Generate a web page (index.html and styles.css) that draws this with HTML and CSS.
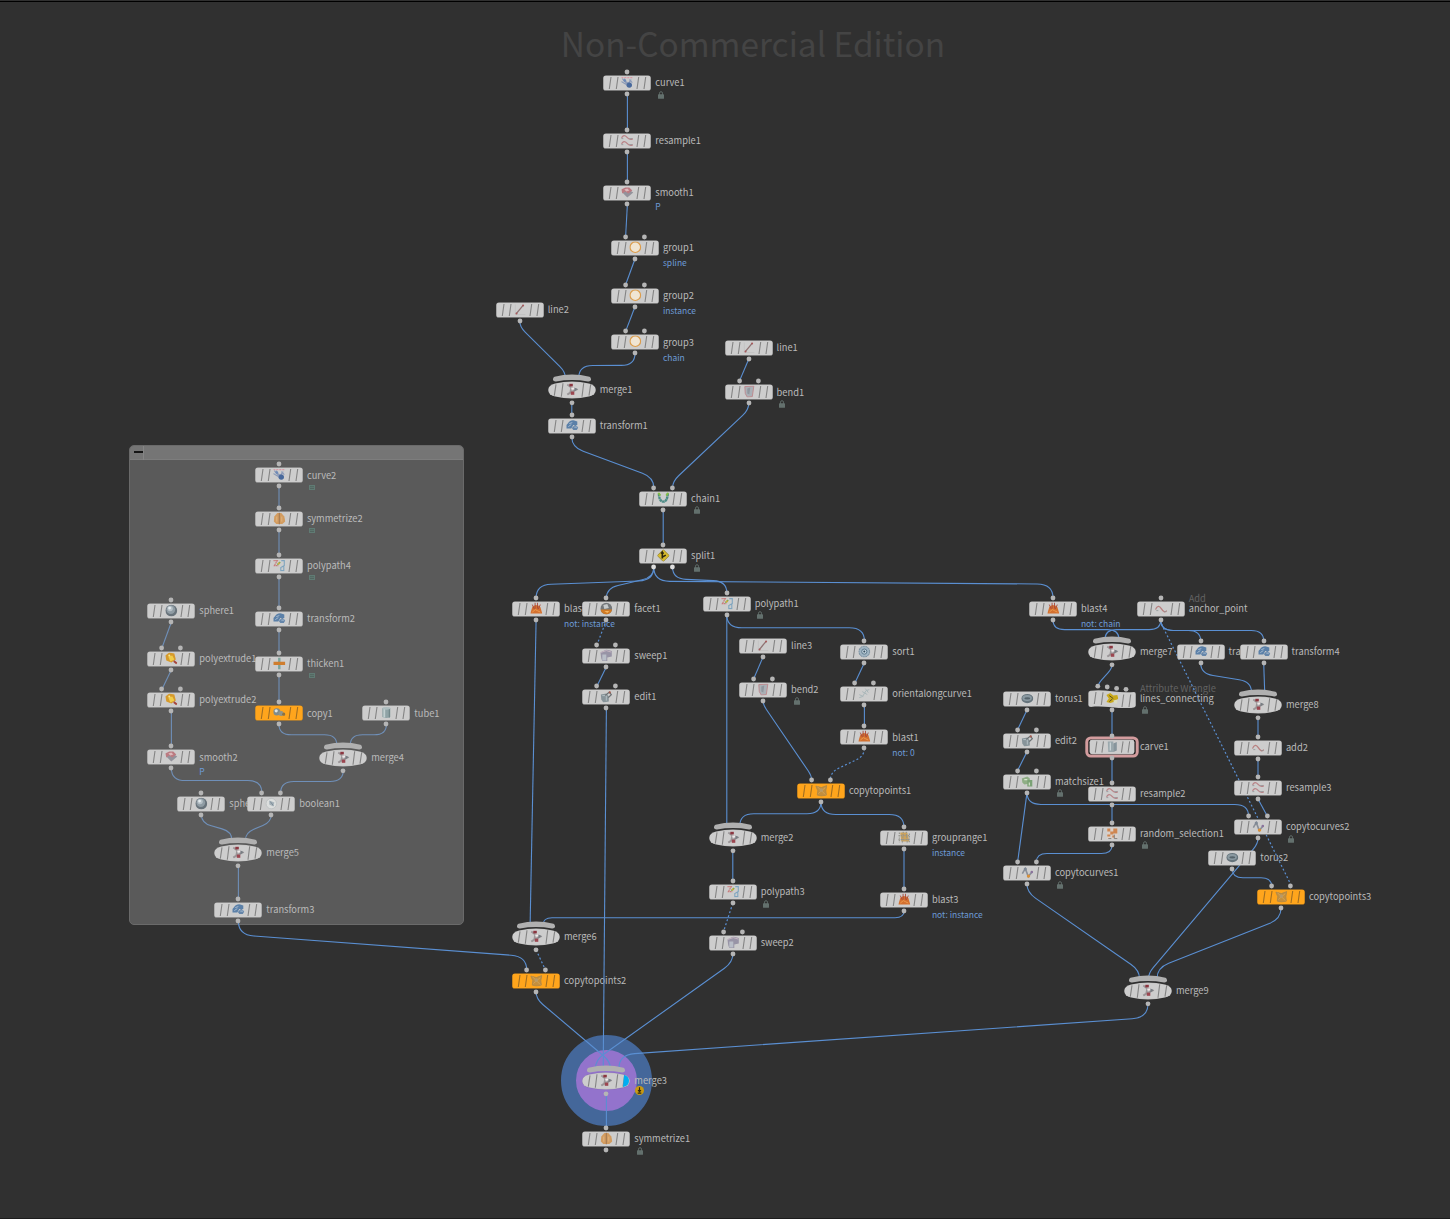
FILE: index.html
```html
<!DOCTYPE html>
<html lang="en">
<head>
    <meta charset="UTF-8">
    <meta name="viewport" content="width=device-width, initial-scale=1.0">
    <title>Network Editor</title>
    <link rel="stylesheet" href="styles.css">
</head>
<body>
    <svg class="symbols" width="0" height="0">
        <!-- node bodies -->
        <symbol id="shape-box" viewBox="0 0 48 18">
            <rect class="shape" x="0.2" y="1.4" width="47.6" height="15.2" rx="2.6"/>
            <path class="ribs" d="M8 3 6.3 15M15 3 13.3 15M35.7 3 34 15M42.7 3 41 15"/>
        </symbol>
        <symbol id="shape-pill" viewBox="0 0 48 18">
            <path class="shape" d="M7 2.4Q24-1.3 41 2.4Q47.8 4 47.8 9T41 15.6Q24 19.3 7 15.6Q.2 14 .2 9T7 2.4Z"/>
            <path class="ribs" d="M8 3.4 6.3 14.6M15 2.2 13.3 15.8M35.7 2.2 34 15.8M42.7 3.4 41 14.6"/>
        </symbol>
        <symbol id="shape-wave" viewBox="0 0 48 18">
            <path class="shape" d="M.3 3Q.3 1 2.5.8C16-1.5 30 3.6 46 2Q47.8 2 47.8 4V15.5Q47.8 17.6 45 17.8C31 19.8 17 15 3 17Q.3 17 .3 15Z"/>
            <path class="ribs" d="M8 2 6.3 14M15 2.3 13.3 15M35.7 4.5 34 17M42.7 4.5 41 17"/>
        </symbol>
        <symbol id="shape-cap" viewBox="0 0 40 9">
            <path d="M2.5 2.8Q20-1.6 37.5 2.8Q39.3 3.8 39 6Q38.5 7.6 36 7.4Q20 4.6 4 7.4Q1.5 7.6 1 6Q.7 3.8 2.5 2.8Z"/>
        </symbol>
        <symbol id="lock" viewBox="0 0 6 8">
            <path d="M1.5 4V2.2Q1.5.7 3 .7T4.5 2.2V4" fill="none" stroke="#63706d" stroke-width=".9"/>
            <rect x="0" y="3.2" width="6" height="4.6" rx=".6" fill="#63706d"/>
        </symbol>
        <symbol id="badge" viewBox="0 0 6 5">
            <rect width="6" height="5" fill="#607b74"/>
            <path d="M1 1.7H5M1 3.5H5" stroke="#4d5c58" stroke-width=".7"/>
        </symbol>
        <symbol id="warning" viewBox="0 0 8 8">
            <circle cx="4" cy="4" r="4" fill="#c99a12"/>
            <path d="M4 1.2V5M2.7 3.6 4 5 5.3 3.6M2.4 6.3H5.6" fill="none" stroke="#33290b"/>
        </symbol>

        <!-- operator icons -->
        <symbol id="i-curve" viewBox="0 0 12 12">
            <path d="M0 1H12" stroke="#d99aa6" stroke-width="1.2" stroke-dasharray="2 1"/>
            <path d="M1 2 8 10M3 2Q4 7 9 6M5 9 10 3M0 5 5 8M8 3 11 6" fill="none" stroke="#8c9bb8" stroke-width="1.2"/>
            <circle cx="8" cy="8.5" r="2.7" fill="#48699c"/><circle cx="3.5" cy="4" r="1.4" fill="#6e8bb8"/>
        </symbol>
        <symbol id="i-resample" viewBox="0 0 12 12">
            <path d="M0 3.5Q2.5-1 5.5 2.500T11.5 4M0 9.500Q2.5 5 5.500 8.500T11.500 10" fill="none" stroke="#b98488" stroke-width="1.3"/>
            <path d="M0 4H2M8 4H11M0 10H2M8 10H11" stroke="#8d9698" stroke-width=".8"/>
        </symbol>
        <symbol id="i-smooth" viewBox="0 0 12 12">
            <path d="M1 6 7 3 12 6 6 11Z" fill="#93929b"/>
            <path d="M0 3 4 1 8 1 11 4 7 7 4 5 1 7Z" fill="#bb7a81"/>
            <path d="M3 3 6 2 8 4 5 5Z" fill="#dcb7ba"/>
        </symbol>
        <symbol id="i-group" viewBox="0 0 12 12">
            <circle cx="6" cy="5.600" r="5.300" fill="#f0e5d3" stroke="#dc9d4c" stroke-width="1.200"/>
        </symbol>
        <symbol id="i-line" viewBox="0 0 12 12">
            <path d="M1 11H11M1 1V11" stroke="#b9b9b9" stroke-width=".5"/>
            <path d="M2 10 9 1.500" stroke="#8f7373" stroke-width="1.300"/>
            <circle cx="2.200" cy="9.800" r="1" fill="#a8595b"/><circle cx="8.800" cy="1.800" r="1" fill="#a8595b"/>
        </symbol>
        <symbol id="i-merge" viewBox="0 0 12 12">
            <path d="M1 1 5 4 4 9 1 11M5 4 10 6 4 9" fill="none" stroke="#9b9698" stroke-width="1.900"/>
            <rect x="3" y="0" width="3.500" height="2.800" fill="#8c3640"/>
            <rect x="4.500" y="8" width="3.500" height="3.200" fill="#9c4650"/>
            <path d="M8 4 11.500 5.500 8 8Z" fill="#777d83"/><path d="M5 4H8V6H5Z" fill="#efe9ea"/>
        </symbol>
        <symbol id="i-transform" viewBox="0 0 12 12">
            <path d="M1.500 4Q4 0 8 .800L11 2V5.500L7 5.500 5 9H0V5.500Z" fill="#5b80a8"/>
            <path d="M5.500 8.500 9 5 12 8 10.500 10.500H7Z" fill="#6485a9"/>
            <path d="M3 4 6 3M2 7 5 5M8 7.500H11" stroke="#b7c8d9" stroke-width=".8"/>
        </symbol>
        <symbol id="i-bend" viewBox="0 0 12 12">
            <path d="M1.500 1 10.500 .500 9 11 4 11.500 2 8Z" fill="#aab0b6" stroke="#bd8b90" stroke-width="1"/>
            <path d="M4 3 7 2 6 9 4 8Z" fill="#8f969e"/>
        </symbol>
        <symbol id="i-chain" viewBox="0 0 12 12">
            <path d="M1.500 1Q2 9 6 9T10.500 1" fill="none" stroke="#4c8b86" stroke-width="2.400" stroke-dasharray="2.500 .4"/>
            <path d="M1 0 3 3M11 0 9 3" stroke="#83bd48" stroke-width="1.900"/>
        </symbol>
        <symbol id="i-split" viewBox="0 0 12 12">
            <path d="M6 0 12 6 6 12 0 6Z" fill="#d6b92c" stroke="#8a7a2c" stroke-width=".7"/>
            <path d="M5 9V2.500M3.800 4.200 5 2.600 6.200 4.200M5 7.500 8.500 5.500" fill="none" stroke="#2b2610" stroke-width="1.600"/>
        </symbol>
        <symbol id="i-symmetrize" viewBox="0 0 12 12">
            <path d="M1 4 4 .500H8L11 4 12 9 9 11.500H3L.5 9Z" fill="#d29c60"/>
            <path d="M6 0V12" stroke="#9a7350" stroke-width=".9"/>
            <path d="M3.500 4V9M8.500 4V9" stroke="#e3bb88" stroke-width=".8"/>
        </symbol>
        <symbol id="i-polypath" viewBox="0 0 12 12">
            <path d="M0 1H4L1 6H5" fill="none" stroke="#c87b7b" stroke-width="1.200" stroke-dasharray="1.500 .4"/>
            <path d="M4 5 7 2.500" stroke="#7cae4b" stroke-width="1.400"/><circle cx="5.500" cy="4" r="1" fill="#d8a73a"/>
            <path d="M8 1H11V6L7.500 8V11H10.500V7" fill="none" stroke="#7fa5bf" stroke-width="1.100"/>
        </symbol>
        <symbol id="i-sphere" viewBox="0 0 12 12">
            <circle cx="6" cy="6" r="5.900" fill="#68737b"/><circle cx="5.500" cy="5" r="4.400" fill="#8f9ca4"/>
            <circle cx="4.800" cy="4" r="2.700" fill="#b7c1c7"/><circle cx="4.300" cy="3.500" r="1.400" fill="#e3eaee"/>
        </symbol>
        <symbol id="i-polyextrude" viewBox="0 0 12 12">
            <path d="M0 3 4 0 9 1 10.500 7 6 10 1 8Z" fill="#d69a2c"/>
            <path d="M3 4 7 3 9 7 5 9Z" fill="#f0cd4a"/>
            <path d="M8.500 8.500 11.500 11" stroke="#a5443c" stroke-width="2"/><circle cx="4" cy="3" r="1" fill="#f7e597"/>
        </symbol>
        <symbol id="i-thicken" viewBox="0 0 12 12">
            <path d="M6 0V12" stroke="#7ba39b" stroke-width="2.400"/>
            <path d="M0 5.800H12" stroke="#cf7d2e" stroke-width="3.200"/>
        </symbol>
        <symbol id="i-copy" viewBox="0 0 12 12">
            <circle cx="3.500" cy="5.200" r="3.600" fill="#7f8b8c"/><circle cx="2.900" cy="4.200" r="1.600" fill="#dfe5e3"/>
            <circle cx="7.800" cy="6.800" r="2.500" fill="#8f9388"/><circle cx="10.500" cy="7.600" r="1.600" fill="#8b7243"/>
        </symbol>
        <symbol id="i-tube" viewBox="0 0 12 12">
            <path d="M2 1.500V10.500Q6 12.500 10 10.500V1.500Z" fill="#8fa3a6"/>
            <path d="M4 2V11" stroke="#c2d0d1" stroke-width="1.800"/><path d="M9 2V11" stroke="#6a8084"/>
            <ellipse cx="6" cy="1.700" rx="4" ry="1.400" fill="#aebdbf"/>
        </symbol>
        <symbol id="i-boolean" viewBox="0 0 12 12">
            <circle cx="6" cy="6" r="5.200" fill="#dcdedd" stroke="#b3b9ba" stroke-width=".6"/>
            <path d="M4 3 9 5 8 9 4 7Z" fill="#a5b1b8"/><path d="M5 4 8 8" stroke="#7d8d99"/>
        </symbol>
        <symbol id="i-blast" viewBox="0 0 12 12">
            <path d="M0 11 2 4.500 5 2.500 8 3 10 4.500 12 11Z" fill="#d3702f"/>
            <path d="M2 2 4 6.500M4.800 0V6M7.200 0V6M10 2 8 6.500" stroke="#a9473a" stroke-width=".9"/>
            <path d="M2 9.500 5 7 7 8 10 9.500" stroke="#eb9a4e" fill="none" stroke-width="1"/>
        </symbol>
        <symbol id="i-facet" viewBox="0 0 12 12">
            <circle cx="6" cy="6" r="5.900" fill="#74787b"/><path d="M.2 7H11.800Q10.500 11.800 6 11.800T.2 7Z" fill="#d07a24"/>
            <path d="M3 2.500 7 1.500 8.500 5.500 4 6.500Z" fill="#c6cacb"/><path d="M4 8.500H9L7 10.500Z" fill="#f3b35d"/>
        </symbol>
        <symbol id="i-sweep" viewBox="0 0 12 12">
            <path d="M0 3 6 0 11.500 1.500V7L7 8V11.500H2L1 9Z" fill="#9894a6"/>
            <path d="M2 5H6V11H2Z" fill="#b9bec8"/><path d="M0 3 6 1 11 2.500" fill="none" stroke="#c4b4c0"/>
        </symbol>
        <symbol id="i-edit" viewBox="0 0 12 12">
            <path d="M.500 4 6 3 8.500 6V11L3 12 1 9Z" fill="#87949a"/><path d="M2 5 6 5V10" stroke="#b3bfc3" fill="none"/>
            <path d="M5 5 9 1.500 11 4 8 7" fill="none" stroke="#6d7275" stroke-width="1.300"/>
            <circle cx="9.500" cy="1.800" r="1.100" fill="#a35a4e"/>
        </symbol>
        <symbol id="i-sort" viewBox="0 0 12 12">
            <circle cx="6" cy="6" r="5.400" fill="#9fb4c2" stroke="#72899a" stroke-dasharray="2 .6"/>
            <circle cx="6" cy="6" r="2.600" fill="#c3d4de" stroke="#5e7a8e"/><circle cx="6" cy="6" r="1" fill="#344c5d"/>
        </symbol>
        <symbol id="i-orient" viewBox="0 0 12 12">
            <path d="M1 10Q5 10 6 6T11 2M1 7 5 9M4 4 9 7M7 1 10 5" fill="none" stroke="#a9b6b9" stroke-width="1"/>
        </symbol>
        <symbol id="i-scatter" viewBox="0 0 12 12">
            <path d="M.500 1.500 6 3 11.500 1 10.500 6 11 10.500 6 11.500 2 10.500 2.500 6Z" fill="#c48f3d" stroke="#a9874c" stroke-width=".8"/>
            <path d="M2 2 10 10M10 3 3 9" stroke="#d6a85d" stroke-width=".8"/><circle cx="6" cy="5.500" r="1.800" fill="#b99a67"/>
        </symbol>
        <symbol id="i-grouprange" viewBox="0 0 12 12">
            <path d="M2 1H9L11 10H3Z" fill="#cda35c"/>
            <path d="M1 1V11M5 0 4 12M8 0 9 12M11 2V11M0 4H12M0 8H12" stroke="#94948c" stroke-width="1.200" stroke-dasharray="1.400 1"/>
        </symbol>
        <symbol id="i-add" viewBox="0 0 12 12">
            <path d="M0 7Q3 1 6 6T11.500 8" fill="none" stroke="#b87f7f" stroke-width="1.300"/>
            <path d="M1 8H3M9 9H11" stroke="#8e9797" stroke-width=".8"/>
        </symbol>
        <symbol id="i-torus" viewBox="0 0 12 12">
            <ellipse cx="6" cy="6" rx="6" ry="4.600" fill="#66747c"/><ellipse cx="5.800" cy="5.400" rx="4.800" ry="3" fill="#8b9aa2"/>
            <ellipse cx="6" cy="5.800" rx="3" ry="1.100" fill="#56646c"/>
        </symbol>
        <symbol id="i-wrangle" viewBox="0 0 12 12">
            <path d="M0 2.500 4 .500 7 3 11 2.500 12 6 9 9 4 10.500 0 9.500 2.500 6Z" fill="#c9a91c"/>
            <path d="M3 3 7 6M3 9 6 6.500" stroke="#5c511d" stroke-width="1"/><path d="M7 8 11 7 11 11H8Z" fill="#d9dbc2"/>
        </symbol>
        <symbol id="i-carve" viewBox="0 0 12 12">
            <path d="M1.500 1H7V11.500H2Z" fill="#9aa8ad"/><path d="M7 3 10.500 1.500V10L7 11.500Z" fill="#87959c"/><path d="M4 2V10" stroke="#cdd7da" stroke-width="1.200"/>
        </symbol>
        <symbol id="i-matchsize" viewBox="0 0 12 12">
            <path d="M.500 3 6 1 8.500 3V8L3 9 1 7Z" fill="#8fae86"/><path d="M6 4.500H11V11H6Z" fill="#7ba275"/>
            <path d="M3 4H6M8 7V10" stroke="#d7e5cf" stroke-width="1.100"/>
        </symbol>
        <symbol id="i-random" viewBox="0 0 12 12">
            <rect x=".5" y=".5" width="11" height="11" fill="#d9d0ca"/>
            <path d="M1 1H4V4H1ZM7 1H11V6H7ZM4 4H7V7H4ZM1 7H4V9H1ZM6 8H8V10H6Z" fill="#cf8650"/>
            <path d="M8 7V11H11M2 11H5" stroke="#85807c" fill="none"/>
        </symbol>
        <symbol id="i-copycurve" viewBox="0 0 12 12">
            <path d="M1 7 4 2 7 10 11 5" fill="none" stroke="#8a8f98" stroke-width="1.600"/>
            <circle cx="4" cy="2.400" r="1.600" fill="#7f8995"/><circle cx="7.200" cy="9.500" r="1.700" fill="#d99038"/><circle cx="10.500" cy="5.500" r="1.300" fill="#8a729c"/>
        </symbol>
    </svg>

    <main class="network" id="network">
        <h1 class="watermark">Non-Commercial Edition</h1>
        <section class="netbox">
            <header class="netbox-header"><span class="netbox-toggle"></span></header>
        </section>
        <div class="display-ring"></div>
        <svg class="wires" id="wires" width="1450" height="1219"></svg>
    </main>

    <script src="graph.js"></script>
</body>
</html>
```
FILE: styles.css
```css
:root {
    --bg: #303030;
    --wire: #5a8fd2;
    --node: #cdcdcd;
    --orange: #ffa51c;
    --dot: #b5b5b5;
    --label: #bababa;
    --sub: #6d9bd6;
}

* {
    margin: 0;
    padding: 0;
    box-sizing: border-box;
}

body {
    font-family: "Noto Sans CJK SC", "Noto Sans", sans-serif;
    background-color: var(--bg);
    overflow: hidden;
}

.symbols {
    position: absolute;
}

.network {
    position: relative;
    width: 1450px;
    height: 1219px;
    background: var(--bg);
    overflow: hidden;
}

.network::before,
.network::after {
    content: "";
    position: absolute;
    left: 0;
    right: 0;
    top: 1px;
    height: 1px;
    background: #000;
}

.network::after {
    top: auto;
    bottom: 0;
    background: #1c1c1c;
}

.watermark {
    padding-top: 16px;
    padding-left: 56px;
    text-align: center;
    font-size: 36px;
    font-size: 33.4px;
    line-height: 54px;
    font-weight: 400;
    color: #444;
}

/* network box */
.netbox {
    position: absolute;
    left: 129px;
    top: 445px;
    width: 335px;
    height: 480px;
    border: 1px solid #6a6a6a;
    border-radius: 5px;
    background: #5a5a5a;
    overflow: hidden;
}

.netbox-header {
    height: 14px;
    background: #757575;
    border-bottom: 1px solid #7d7d7d;
}

.netbox-toggle {
    display: block;
    width: 14px;
    height: 14px;
    padding: 5px 0 0 4px;
    border-right: 1px solid #858585;
}

.netbox-toggle::before {
    content: "";
    display: block;
    width: 9px;
    height: 2px;
    background: #151515;
}

.display-ring {
    position: absolute;
    left: 561px;
    top: 1035px;
    width: 91px;
    height: 91px;
    border: 15px solid #44679a;
    border-radius: 50%;
    background: #9373cc;
}

.wires {
    position: absolute;
    left: 0;
    top: 0;
    z-index: 2;
}

.wire {
    fill: none;
    stroke: var(--wire);
    stroke-width: 1.1;
}

.wire.boxed {
    stroke: #6f8fb8;
}

.wire.dashed {
    stroke-width: 1.2;
    stroke-dasharray: 2 2.2;
}

/* labels */
.caption {
    position: absolute;
    z-index: 1;
    white-space: nowrap;
    font-size: 9.3px;
    line-height: 12px;
    color: var(--label);
}

.caption .type {
    position: absolute;
    left: 0;
    bottom: 10px;
    color: #626262;
}

.caption .sub {
    position: absolute;
    left: 0;
    top: 15px;
    font-size: 8.5px;
    color: var(--sub);
}

.caption .sub.near {
    top: 14px;
}

.caption .flag {
    position: absolute;
    left: 2.6px;
    top: 14.4px;
    width: 6px;
    height: 8px;
}

.caption .flag.badge {
    left: 2px;
    top: 16.4px;
    height: 5px;
}

.caption .flag.warning {
    left: 1px;
    top: 12.4px;
    width: 9px;
    height: 9px;
}

/* nodes */
.node {
    position: absolute;
    z-index: 3;
    width: 48px;
    height: 30px;
    overflow: visible;
    color: var(--node);
}

.node.orange {
    color: var(--orange);
}

.shape {
    fill: currentColor;
    stroke: rgba(0, 0, 0, 0.15);
    stroke-width: 0.5;
}

.ribs {
    fill: none;
    stroke: #2a2a2a;
    stroke-opacity: 0.45;
    stroke-width: 1.1;
}

.dot {
    fill: var(--dot);
}

.dot.bright {
    fill: #dedede;
}

.cap {
    fill: #b0b0b0;
}

.selection {
    fill: #1a1a1a;
    stroke: #d39c9e;
    stroke-width: 3;
}

.display-flag {
    fill: #00adf2;
}
```
FILE: graph.js
```js
// x, y are node centres. ins: number of inputs, shape defaults to box
const nodes = [
    { name: 'curve1', x: 627.4, y: 83.3, icon: 'curve', ins: 1, flag: 'lock' },
    { name: 'resample1', x: 627.4, y: 141, icon: 'resample', ins: 1 },
    { name: 'smooth1', x: 627.4, y: 193, icon: 'smooth', ins: 1, sub: 'P' },
    { name: 'group1', x: 635, y: 248, icon: 'group', ins: 2, sub: 'spline' },
    { name: 'group2', x: 635, y: 295.7, icon: 'group', ins: 2, sub: 'instance' },
    { name: 'group3', x: 635, y: 342.4, icon: 'group', ins: 2, sub: 'chain' },
    { name: 'line2', x: 519.8, y: 310.3, icon: 'line', ins: 0 },
    { name: 'merge1', x: 571.8, y: 390, icon: 'merge', shape: 'pill' },
    { name: 'transform1', x: 571.8, y: 426, icon: 'transform', ins: 1 },
    { name: 'line1', x: 748.7, y: 348.3, icon: 'line', ins: 0 },
    { name: 'bend1', x: 748.7, y: 392.4, icon: 'bend', ins: 2, flag: 'lock' },
    { name: 'chain1', x: 663.2, y: 498.7, icon: 'chain', ins: 2, flag: 'lock' },
    { name: 'split1', x: 663.2, y: 556.3, icon: 'split', ins: 1, outs: 2, flag: 'lock' },

    { name: 'curve2', x: 279, y: 475.4, icon: 'curve', ins: 1, flag: 'badge' },
    { name: 'symmetrize2', x: 279, y: 519, icon: 'symmetrize', ins: 1, flag: 'badge' },
    { name: 'polypath4', x: 279, y: 566, icon: 'polypath', ins: 1, flag: 'badge' },
    { name: 'transform2', x: 279, y: 618.7, icon: 'transform', ins: 1 },
    { name: 'sphere1', x: 171.4, y: 611, icon: 'sphere', ins: 1 },
    { name: 'polyextrude1', x: 171.4, y: 658.7, icon: 'polyextrude', ins: 2 },
    { name: 'polyextrude2', x: 171.4, y: 700.3, icon: 'polyextrude', ins: 2 },
    { name: 'thicken1', x: 279, y: 663.8, icon: 'thicken', ins: 1, flag: 'badge' },
    { name: 'copy1', x: 279, y: 713.4, icon: 'copy', ins: 1, orange: true },
    { name: 'tube1', x: 386.4, y: 713.4, icon: 'tube', ins: 1 },
    { name: 'merge4', x: 343.3, y: 757.5, icon: 'merge', shape: 'pill' },
    { name: 'smooth2', x: 171.4, y: 757.4, icon: 'smooth', ins: 1, sub: 'P' },
    { name: 'sphere2', x: 201.4, y: 803.7, icon: 'sphere', ins: 1 },
    { name: 'boolean1', x: 271.3, y: 803.7, icon: 'boolean', ins: 2 },
    { name: 'merge5', x: 238.4, y: 852.5, icon: 'merge', shape: 'pill' },
    { name: 'transform3', x: 238.4, y: 910.2, icon: 'transform', ins: 1 },

    { name: 'blast2', x: 536.1, y: 609, icon: 'blast', ins: 1, sub: 'not: instance' },
    { name: 'facet1', x: 606.4, y: 609, icon: 'facet', ins: 1 },
    { name: 'sweep1', x: 606.4, y: 655.8, icon: 'sweep', ins: 2 },
    { name: 'edit1', x: 606.4, y: 697, icon: 'edit', ins: 2 },
    { name: 'polypath1', x: 726.8, y: 603.7, icon: 'polypath', ins: 1, flag: 'lock' },
    { name: 'line3', x: 763.1, y: 645.9, icon: 'line', ins: 0 },
    { name: 'bend2', x: 763.1, y: 689.8, icon: 'bend', ins: 2, flag: 'lock' },
    { name: 'sort1', x: 864.4, y: 651.8, icon: 'sort', ins: 1 },
    { name: 'orientalongcurve1', x: 864.4, y: 693.8, icon: 'orient', ins: 2 },
    { name: 'blast1', x: 864.4, y: 737.4, icon: 'blast', ins: 1, sub: 'not: 0' },
    { name: 'copytopoints1', x: 821, y: 790.7, icon: 'scatter', ins: 2, orange: true },
    { name: 'merge2', x: 732.8, y: 838.2, icon: 'merge', shape: 'pill' },
    { name: 'grouprange1', x: 904, y: 838.2, icon: 'grouprange', ins: 1, sub: 'instance' },
    { name: 'polypath3', x: 732.8, y: 892.3, icon: 'polypath', ins: 1, flag: 'lock' },
    { name: 'blast3', x: 904, y: 899.8, icon: 'blast', ins: 1, sub: 'not: instance' },
    { name: 'sweep2', x: 732.8, y: 943, icon: 'sweep', ins: 2 },
    { name: 'merge6', x: 536.1, y: 937.2, icon: 'merge', shape: 'pill' },
    { name: 'copytopoints2', x: 536.1, y: 981, icon: 'scatter', ins: 2, orange: true },
    { name: 'merge3', x: 606.4, y: 1081, icon: 'merge', shape: 'pill', flag: 'warning', display: true },
    { name: 'symmetrize1', x: 606.4, y: 1139.3, icon: 'symmetrize', ins: 1, flag: 'lock' },

    { name: 'blast4', x: 1053, y: 609, icon: 'blast', ins: 1, sub: 'not: chain' },
    { name: 'anchor_point', x: 1160.8, y: 609, icon: 'add', ins: 1, type: 'Add' },
    { name: 'merge7', x: 1112, y: 651.8, icon: 'merge', shape: 'pill' },
    { name: 'transform5', x: 1200.7, y: 652, icon: 'transform', ins: 1 },
    { name: 'transform4', x: 1263.7, y: 652, icon: 'transform', ins: 1 },
    { name: 'torus1', x: 1027, y: 699, icon: 'torus', ins: 0 },
    { name: 'lines_connecting', x: 1112, y: 699, icon: 'wrangle', shape: 'wave', ins: 4, type: 'Attribute Wrangle', flag: 'lock' },
    { name: 'merge8', x: 1258, y: 704.8, icon: 'merge', shape: 'pill' },
    { name: 'edit2', x: 1027, y: 740.8, icon: 'edit', ins: 2 },
    { name: 'carve1', x: 1112, y: 747.2, icon: 'carve', ins: 1, selected: true },
    { name: 'add2', x: 1258, y: 748, icon: 'add', ins: 1 },
    { name: 'matchsize1', x: 1027, y: 781.6, icon: 'matchsize', ins: 2, flag: 'lock' },
    { name: 'resample2', x: 1112, y: 794, icon: 'resample', ins: 1 },
    { name: 'resample3', x: 1258, y: 788, icon: 'resample', ins: 1 },
    { name: 'random_selection1', x: 1112, y: 833.9, icon: 'random', ins: 1, flag: 'lock' },
    { name: 'copytocurves2', x: 1258, y: 827.3, icon: 'copycurve', ins: 2, flag: 'lock' },
    { name: 'copytocurves1', x: 1027, y: 873.1, icon: 'copycurve', ins: 2, flag: 'lock' },
    { name: 'torus2', x: 1232.4, y: 858.2, icon: 'torus', ins: 0 },
    { name: 'copytopoints3', x: 1281, y: 897.3, icon: 'scatter', ins: 2, orange: true },
    { name: 'merge9', x: 1148, y: 991, icon: 'merge', shape: 'pill' }
];

// [from, to, input x offset, style, output x offset]
const wires = [
    ['curve1', 'resample1', 0], ['resample1', 'smooth1', 0], ['smooth1', 'group1', -9.4],
    ['group1', 'group2', -9.4], ['group2', 'group3', -9.4], ['group3', 'merge1', 7],
    ['line2', 'merge1', -6.5], ['merge1', 'transform1', 0], ['transform1', 'chain1', -9.4],
    ['line1', 'bend1', -9.4], ['bend1', 'chain1', 9.4], ['chain1', 'split1', 0],
    ['split1', 'blast2', 0, '', -9.4], ['split1', 'facet1', 0, '', -9.4],
    ['split1', 'blast4', 0, '', -9.4], ['split1', 'polypath1', 0, '', 9.4],

    ['curve2', 'symmetrize2', 0, 'boxed'], ['symmetrize2', 'polypath4', 0, 'boxed'],
    ['polypath4', 'transform2', 0, 'boxed'], ['transform2', 'thicken1', 0, 'boxed'],
    ['thicken1', 'copy1', 0, 'boxed'], ['copy1', 'merge4', -6.5, 'boxed'], ['tube1', 'merge4', 7, 'boxed'],
    ['sphere1', 'polyextrude1', -9.4, 'boxed'], ['polyextrude1', 'polyextrude2', -9.4, 'boxed'],
    ['polyextrude2', 'smooth2', 0, 'boxed'], ['smooth2', 'boolean1', -9.4, 'boxed'],
    ['merge4', 'boolean1', 9.4, 'boxed'], ['sphere2', 'merge5', -6.5, 'boxed'],
    ['boolean1', 'merge5', 7, 'boxed'], ['merge5', 'transform3', 0, 'boxed'],
    ['transform3', 'copytopoints2', -9.4],

    ['blast2', 'merge6', -6], ['facet1', 'sweep1', -9.4, 'dashed'], ['sweep1', 'edit1', -9.4],
    ['edit1', 'merge3', -3.2], ['polypath1', 'merge2', -6], ['polypath1', 'sort1', 0],
    ['line3', 'bend2', -9.4], ['bend2', 'copytopoints1', -9.4], ['sort1', 'orientalongcurve1', -9.4],
    ['orientalongcurve1', 'blast1', 0], ['blast1', 'copytopoints1', 9.4, 'dashed'],
    ['copytopoints1', 'merge2', 7], ['copytopoints1', 'grouprange1', 0], ['merge2', 'polypath3', 0],
    ['grouprange1', 'blast3', 0], ['polypath3', 'sweep2', -9.4, 'dashed'], ['blast3', 'merge6', 7],
    ['merge6', 'copytopoints2', 9.4, 'dashed'], ['copytopoints2', 'merge3', 4],
    ['sweep2', 'merge3', -11], ['merge3', 'symmetrize1', 0],

    ['blast4', 'merge7', 7], ['anchor_point', 'merge7', -7], ['anchor_point', 'transform5', 0],
    ['anchor_point', 'transform4', 0], ['anchor_point', 'copytopoints3', 9.4, 'dashed'],
    ['merge7', 'lines_connecting', -14.2], ['transform5', 'merge8', -6.5], ['transform4', 'merge8', 6.7],
    ['lines_connecting', 'carve1', 0], ['merge8', 'add2', 0], ['torus1', 'edit2', -9.4],
    ['edit2', 'matchsize1', -9.4], ['carve1', 'resample2', 0], ['resample2', 'random_selection1', 0],
    ['matchsize1', 'copytocurves1', -9.4], ['matchsize1', 'copytocurves2', -9.4],
    ['random_selection1', 'copytocurves1', 9.4], ['add2', 'resample3', 0], ['resample3', 'copytocurves2', 9.4],
    ['torus2', 'copytopoints3', -9.4], ['copytocurves1', 'merge9', -8.5], ['copytocurves2', 'merge9', 0.5],
    ['copytopoints3', 'merge9', 9], ['merge9', 'merge3', 12.5]
];

const network = document.getElementById('network');
const byName = Object.fromEntries(nodes.map(n => [n.name, n]));

function dot(x, y, bright) {
    return `<circle class="dot${bright ? ' bright' : ''}" cx="${x}" cy="${y}" r="2.4"/>`;
}

function drawNode(n) {
    const shape = n.shape || 'box';
    const pill = shape === 'pill';
    let svg = '';

    if (n.selected) svg += '<rect class="selection" x="-1.2" y="6" width="50.4" height="18" rx="4"/>';
    if (pill) svg += '<use class="cap" href="#shape-cap" x="4" y="-1" width="40" height="9"/>';
    else if (n.ins === 1) svg += dot(24, 4);
    else if (n.ins === 2) svg += dot(14.6, 4) + dot(33.4, 4);
    else if (n.ins === 4) svg += dot(9.8, 2.2) + dot(19.2, 3) + dot(28.6, 4.4) + dot(38, 5.3);

    if (n.outs === 2) svg += dot(14.6, 26, true) + dot(33.4, 26, true);
    else svg += dot(24, pill ? 27.8 : 26);

    svg += n.selected
        ? '<use href="#shape-box" x="1" y="6.500" width="46" height="17"/>'
        : `<use href="#shape-${shape}" y="6" width="48" height="18"/>`;
    if (n.display) svg += '<path class="display-flag" d="M42 9Q47 10 47 15T41 21Z"/>';
    svg += `<use href="#i-${n.icon}" x="18.3" y="8.6" width="12" height="12"/>`;

    network.insertAdjacentHTML('beforeend',
        `<svg class="node${n.orange ? ' orange' : ''}" style="left:${n.x - 24}px;top:${n.y - 15}px">${svg}</svg>`);
}

function drawCaption(n) {
    let html = n.name;
    if (n.type) html += `<span class="type">${n.type}</span>`;
    if (n.sub) html += `<span class="sub${n.sub === 'P' ? ' near' : ''}">${n.sub}</span>`;
    if (n.flag) html += `<svg class="flag ${n.flag}"><use href="#${n.flag}"/></svg>`;
    network.insertAdjacentHTML('beforeend',
        `<div class="caption" style="left:${n.x + 27.9}px;top:${n.y - 6.9}px">${html}</div>`);
}

// vertical stub at both ends, rounded into a straight run between them;
// the steeper the wire, the shorter the stubs
function wirePath(x1, y1, x2, y2) {
    const dx = x2 - x1;
    const h = y2 - y1;
    if (Math.abs(dx) < 11) return `M${x1} ${y1}L${x2} ${y2}`;
    const k = Math.min(14 * dx * dx / (dx * dx + h * h), h / 2);
    const top = y1 + k;
    const dy = y2 - k - top;
    const len = Math.hypot(dx, dy);
    const r = Math.min(k + 2, len / 2) / len;
    return `M${x1} ${y1}Q${x1} ${top} ${x1 + dx * r} ${top + dy * r}` +
        `L${x2 - dx * r} ${y2 - k - dy * r}Q${x2} ${y2 - k} ${x2} ${y2}`;
}

document.getElementById('wires').innerHTML = wires.map(([from, to, inX, style = '', outX = 0]) => {
    const a = byName[from];
    const b = byName[to];
    const y1 = a.y + (a.shape === 'pill' ? 12.8 : 11);
    const y2 = b.y - (b.shape === 'pill' ? 12.5 : 11);
    return `<path class="wire ${style}" d="${wirePath(a.x + outX, y1, b.x + inX, y2)}"/>`;
}).join('');

nodes.forEach(drawCaption);
nodes.forEach(drawNode);
```
